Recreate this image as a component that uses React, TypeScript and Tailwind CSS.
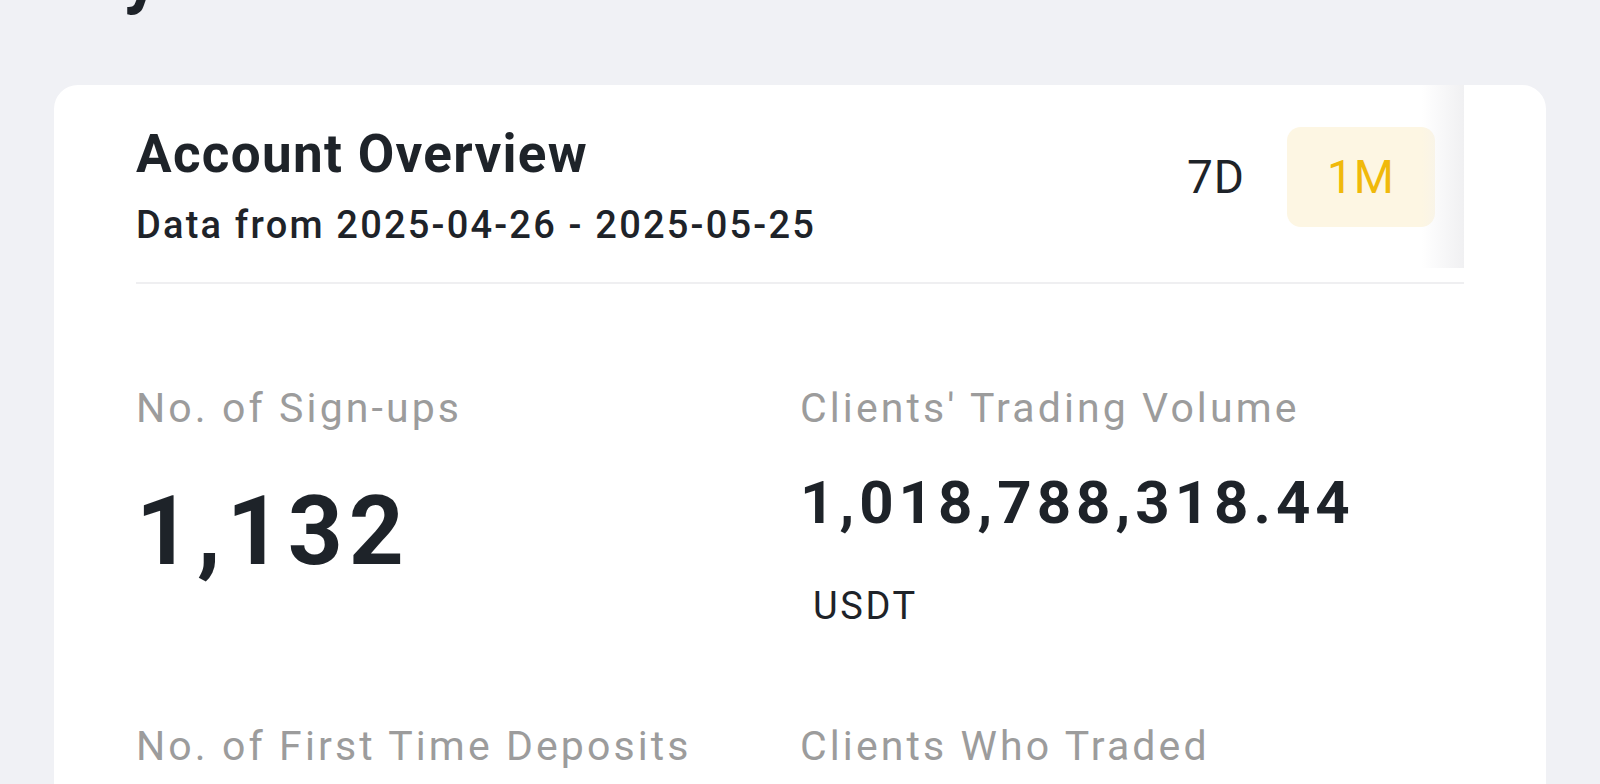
import React from 'react';

type Stat = {
  label: string;
  value?: string;
  unit?: string;
  big?: boolean;
};

const stats: Stat[] = [
  { label: 'No. of Sign-ups', value: '1,132', big: true },
  { label: "Clients' Trading Volume", value: '1,018,788,318.44', unit: 'USDT' },
  { label: 'No. of First Time Deposits' },
  { label: 'Clients Who Traded' },
];

function StatCell({ stat }: { stat: Stat }) {
  return (
    <div className="flex flex-col">
      <span className="text-[41px] leading-[41px] tracking-[3.1px] text-[#9c9c9c]">{stat.label}</span>
      {stat.value && stat.big && (
        <span className="mt-[54px] text-[96px] leading-[96px] font-bold tracking-[6px] text-[#1e2329]">
          {stat.value}
        </span>
      )}
      {stat.value && !stat.big && (
        <span className="mt-[44px] text-[60px] leading-[60px] font-bold tracking-[5px] text-[#1e2329]">
          {stat.value}
        </span>
      )}
      {stat.unit && (
        <span className="mt-[54px] pl-[13px] text-[38px] leading-[38px] tracking-[2.6px] text-[#1e2329]">
          {stat.unit}
        </span>
      )}
    </div>
  );
}

export default function App() {
  return (
    <div className="h-[784px] w-full overflow-hidden bg-[#f0f1f5] font-['Roboto',sans-serif]">
      {/* page title, scrolled mostly out of view */}
      <div className="-mt-[61px] pl-[60px] text-[72px] leading-[72px] font-bold text-[#1e2329]">My Dashboard</div>

      <div className="mx-[54px] mt-[74px] rounded-[24px] bg-white px-[82px] pb-10">
        {/* header */}
        <div className="relative flex items-start justify-between border-b-2 border-[#efeff1] pt-[43px] pb-[38px]">
          <div className="flex flex-col">
            <h2 className="text-[53px] leading-[53px] font-bold tracking-[1.3px] text-[#1e2329]">Account Overview</h2>
            <p className="mt-[25px] text-[38px] leading-[38px] font-medium tracking-[2.2px] text-[#1e2329]">
              Data from 2025-04-26 - 2025-05-25
            </p>
          </div>
          <div className="-mt-[1px] flex items-center gap-0.5 pr-[29px]">
            <button className="flex h-[100px] items-center rounded-[14px] px-[40px] text-[46px] tracking-[1px] text-[#1e2329]">
              7D
            </button>
            <button className="flex h-[100px] items-center rounded-[14px] bg-[#fdf6e3] px-[40px] text-[46px] tracking-[1px] text-[#f0b90b]">
              1M
            </button>
          </div>
          {/* scroll fade at the end of the tab row */}
          <div className="pointer-events-none absolute top-0 right-0 h-[183px] w-[42px] bg-linear-to-r from-white/0 to-[#f0f0f2]" />
        </div>

        {/* stats */}
        <div className="grid grid-cols-2 gap-y-[101px] pt-[104px]">
          {stats.map((s) => (
            <StatCell key={s.label} stat={s} />
          ))}
        </div>
      </div>
    </div>
  );
}
